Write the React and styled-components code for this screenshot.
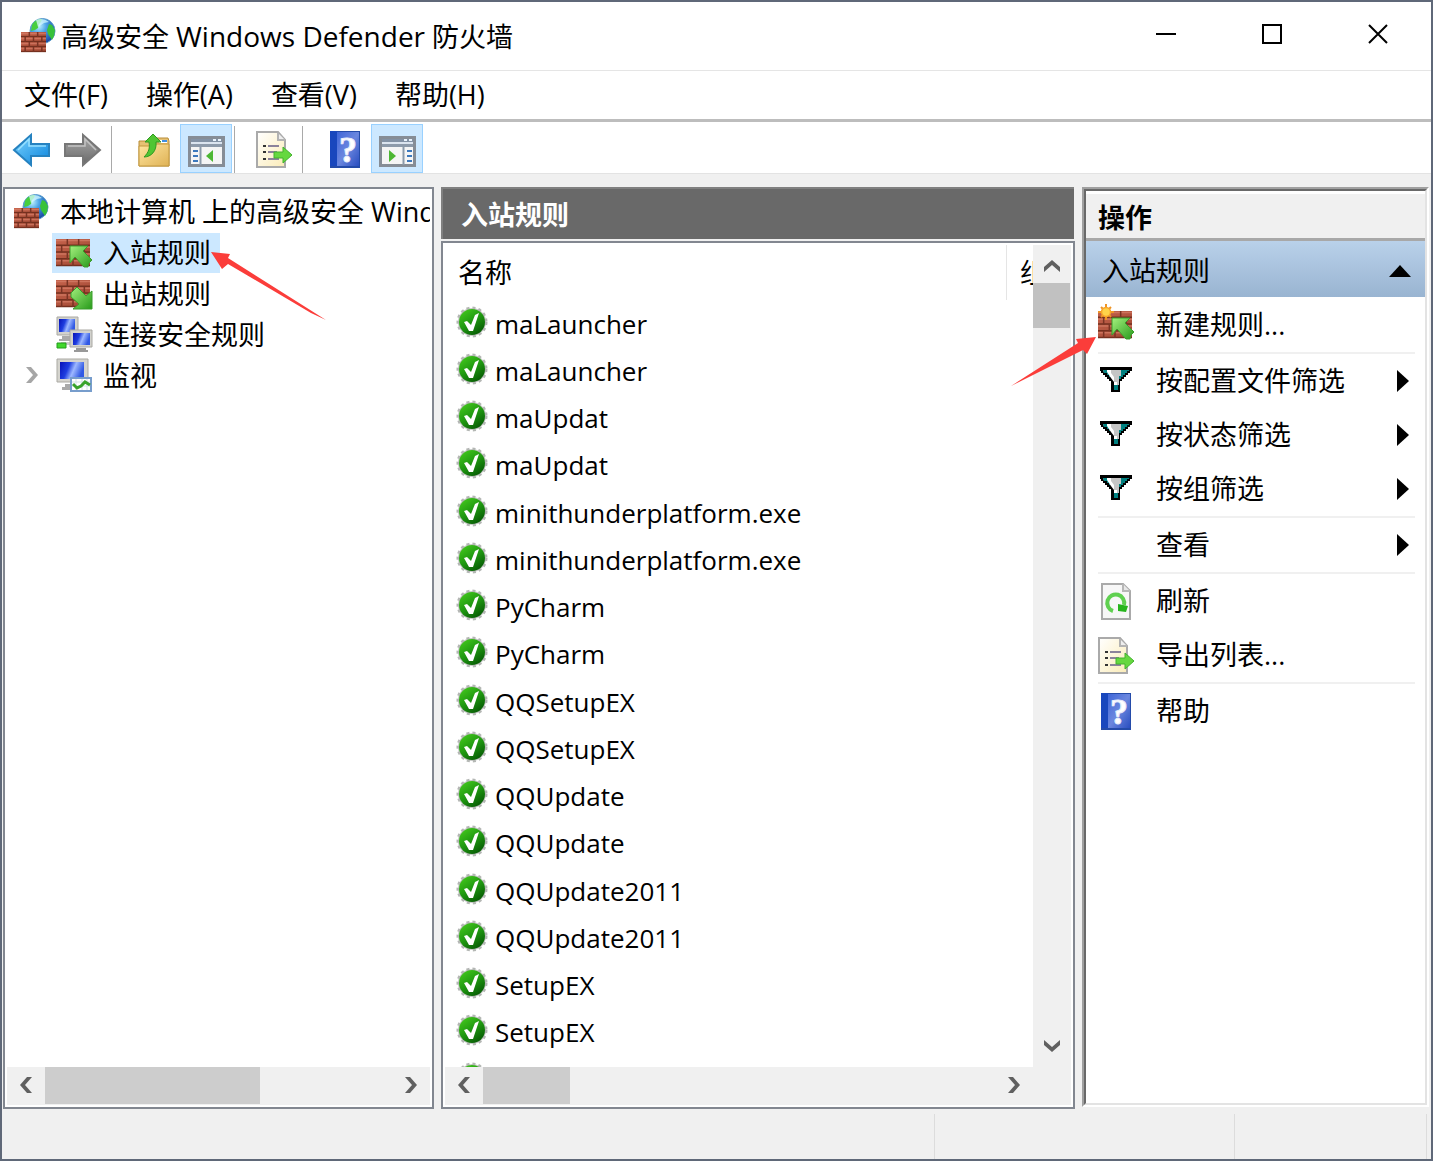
import styled, { createGlobalStyle } from "styled-components";

const GlobalStyle = createGlobalStyle`
  * {
    box-sizing: border-box;
  }

  body {
    margin: 0;
    color: #000;
    font-family: "Open Sans", "Noto Sans CJK SC", sans-serif;
    font-size: 27px;
    line-height: 40px;
  }

  button {
    padding: 0;
    border: 0;
    background: none;
    color: inherit;
    font: inherit;
    text-align: left;
    white-space: nowrap;
  }

  svg {
    display: block;
    flex: none;
  }
`;

const Window = styled.div`
  display: flex;
  flex-direction: column;
  height: 100vh;
  border: 2px solid #5f6878;
  background: #f0f0f0;
`;

const TitleBar = styled.header`
  display: flex;
  flex: none;
  align-items: center;
  height: 69px;
  padding-left: 19px;
  border-bottom: 1px solid #e5e5e5;
  background: #fff;
`;

const Title = styled.h1`
  flex: 1;
  margin: 0;
  padding-left: 5px;
  font-size: 27px;
  font-weight: 400;
`;

const ProductName = styled.span`
  font-size: 28px;
`;

const CaptionButton = styled.button`
  display: flex;
  align-items: center;
  align-self: flex-start;
  justify-content: center;
  width: 106px;
  height: 64px;
`;

const MenuBar = styled.nav`
  display: flex;
  flex: none;
  gap: 38px;
  height: 51px;
  padding: 4px 22px;
  border-bottom: 3px solid #bdbdbd;
  background: #fff;
`;

const MenuButton = styled.button`
  font-size: 27px;
`;

const Toolbar = styled.div`
  display: flex;
  flex: none;
  align-items: flex-end;
  height: 52px;
  padding-left: 3px;
  border-bottom: 1px solid #e3e3e3;
  background: #fff;
`;

const ToolButton = styled.button`
  display: flex;
  align-items: center;
  justify-content: center;
  width: 52px;
  height: 49px;
  padding-top: 2px;
  border: 1px solid ${({ $active }) => ($active ? "#99d1ff" : "transparent")};
  background: ${({ $active }) => ($active ? "#cce8ff" : "none")};
`;

const ToolDivider = styled.span`
  width: 1px;
  height: 47px;
  margin-right: ${({ $gap }) => $gap}px;
  margin-left: 2px;
  background: #a9a9a9;
`;

const Panes = styled.main`
  display: grid;
  flex: 1;
  grid-template-columns: 431fr 634fr 347fr;
  gap: 7px;
  min-height: 0;
  padding: 13px 2px 0 1px;
`;

const TreePane = styled.section`
  display: flex;
  flex-direction: column;
  min-width: 0;
  border: 2px solid #828790;
  background: #fff;
`;

const Tree = styled.ul`
  flex: 1;
  min-height: 0;
  margin: 0 2px 0 0;
  padding: 2px 0 0;
  overflow: hidden;
  list-style: none;
`;

const TreeRow = styled.li`
  position: relative;
  display: flex;
  align-items: center;
  height: 41px;
  padding-left: ${({ $root }) => ($root ? 9 : 0)}px;
`;

const Expander = styled.button`
  display: flex;
  justify-content: center;
  width: 47px;
  padding-left: 7px;
`;

const TreeButton = styled.button`
  display: flex;
  align-items: center;
  gap: ${({ $root }) => ($root ? 11 : 10)}px;
  min-width: 0;
  padding: 0 9px 0 ${({ $root }) => ($root ? 0 : 4)}px;
  background: ${({ $selected }) => ($selected ? "#cce8ff" : "none")};
`;

const TreeArrow = styled.svg`
  position: absolute;
  top: 20px;
  left: 206px;
`;

const ListPane = styled.section`
  display: flex;
  flex-direction: column;
  min-width: 0;
  min-height: 0;
`;

const PaneTitle = styled.h2`
  flex: none;
  height: 52px;
  margin: 0 1px 0 0;
  padding: 6px 18px;
  border: 2px solid #808080;
  border-right: 0;
  border-bottom: 0;
  background: #696969;
  color: #fff;
  font-size: 27px;
  font-weight: 700;
`;

const ListBox = styled.div`
  display: flex;
  flex: 1;
  flex-direction: column;
  min-height: 0;
  margin-top: 2px;
  padding: 2px 2px 0;
  border: 2px solid #828790;
  background: #fff;
`;

const ListBody = styled.div`
  display: flex;
  flex: 1;
  min-height: 0;
`;

const TableClip = styled.div`
  flex: 1;
  min-width: 0;
  overflow: hidden;
`;

const RuleTable = styled.table`
  width: 100%;
  table-layout: fixed;
  border-collapse: collapse;
  text-align: left;
`;

const HeadCell = styled.th`
  width: ${({ $width }) => $width || "auto"};
  height: 55px;
  padding: 0 13px;
  border-right: 1px solid #e5e5e5;
  overflow: hidden;
  font-weight: 400;
  white-space: nowrap;

  &:last-child {
    border-right: 0;
  }
`;

const RuleRow = styled.tr`
  height: 47px;

  &:nth-child(4n) {
    height: 48px;
  }
`;

const RuleCell = styled.td`
  padding: 0 0 0 11px;
`;

const RuleName = styled.div`
  display: flex;
  align-items: center;
  gap: 7px;
  font-size: 26px;

  svg {
    margin-bottom: 4px;
  }
`;

const VerticalBar = styled.div`
  display: flex;
  flex: none;
  flex-direction: column;
  width: 38px;
  background: #f0f0f0;
`;

const HorizontalBar = styled.div`
  display: flex;
  flex: none;
  height: 38px;
  margin: ${({ $corner }) => ($corner ? "0 0 2px" : "0 2px 2px")};
  padding-right: ${({ $corner }) => ($corner ? 38 : 0)}px;
  background: #f0f0f0;
`;

const ScrollButton = styled.button`
  display: flex;
  align-items: center;
  justify-content: center;
  width: 38px;
  height: 38px;
`;

const ScrollTrack = styled.div`
  flex: 1;
`;

const ScrollThumb = styled.div`
  width: ${({ $width }) => $width};
  height: ${({ $height }) => $height};
  background: ${({ $color }) => $color || "#cdcdcd"};
`;

const ActionPane = styled.aside`
  min-width: 0;
  margin-bottom: 2px;
  border: 2px solid #a0a0a0;
  border-right-color: #fff;
  border-bottom-color: #fff;
  background: #fff;
`;

const ActionFrame = styled.div`
  height: 100%;
  border: 2px solid #696969;
  border-right-color: #e3e3e3;
  border-bottom-color: #e3e3e3;
`;

const ActionTitle = styled.h2`
  height: 50px;
  margin: 0;
  padding: 4px 12px;
  border-top: 3px solid #fff;
  border-bottom: 3px solid #a8a8a8;
  background: #f0f0f0;
  font-size: 27px;
  font-weight: 700;
`;

const ActionGroup = styled.button`
  display: flex;
  align-items: center;
  justify-content: space-between;
  width: 100%;
  height: 56px;
  padding: 3px 14px 0 16px;
  background: linear-gradient(#b9d1ea, #99b4d1);
`;

const ActionList = styled.ul`
  margin: 0;
  padding: 1px 10px 0 12px;
  list-style: none;
`;

const ActionItem = styled.li`
  position: relative;
  border-bottom: ${({ $divided }) => ($divided ? "2px solid #f0f0f0" : "0")};
`;

const ActionButton = styled.button`
  display: grid;
  grid-template-columns: 36px 1fr auto;
  align-items: center;
  gap: 22px;
  width: 100%;
  height: 54px;
  padding-right: 6px;
`;

const IconSlot = styled.span`
  display: flex;
  justify-content: center;
`;

const ActionArrow = styled.svg`
  position: absolute;
  top: 38px;
  left: -88px;
`;

const StatusBar = styled.footer`
  display: grid;
  flex: none;
  grid-template-columns: 934fr 300fr 192fr;
  height: 50px;
  margin-right: 4px;
  padding-top: 5px;
`;

const StatusCell = styled.div`
  border-right: 1px solid #dcdcdc;
`;

function Bricks({ x = 0, y = 0, width, height, rows = 4 }) {
  const step = height / rows;
  const brick = width / 3;
  const joints = [];
  for (let row = 0; row < rows; row++) {
    const start = row % 2 ? brick / 2 : brick;
    for (let jx = start; jx < width - 1; jx += brick) {
      joints.push(`M${x + jx} ${y + row * step}v${step}`);
    }
  }
  const lines = Array.from({ length: rows }, (_, i) => y + i * step);
  return (
    <g>
      <rect x={x} y={y} width={width} height={height} fill="url(#brick)" />
      {lines.map((line) => (
        <g key={line}>
          <path d={`M${x} ${line + 1.5}h${width}`} stroke="#d8806a" strokeWidth="1.5" opacity=".7" />
          <path d={`M${x} ${line + step - 0.5}h${width}`} stroke="#75301f" strokeWidth="1.3" />
        </g>
      ))}
      <path d={joints.join("")} stroke="#7a3424" strokeWidth="1.5" />
    </g>
  );
}

function SharedGradients() {
  return (
    <svg width="0" height="0" style={{ position: "absolute" }} aria-hidden="true">
      <defs>
        <linearGradient id="brick" x2="1" y2="1">
          <stop offset="0" stopColor="#c4624b" />
          <stop offset="1" stopColor="#a04733" />
        </linearGradient>
        <radialGradient id="globe" cx=".35" cy=".3" r=".75">
          <stop offset="0" stopColor="#c5f4ff" />
          <stop offset=".4" stopColor="#4ca5e8" />
          <stop offset="1" stopColor="#1745a0" />
        </radialGradient>
        <linearGradient id="green" x2="1" y2="1">
          <stop offset="0" stopColor="#a4f07e" />
          <stop offset="1" stopColor="#279a1a" />
        </linearGradient>
        <linearGradient id="badge" x2=".7" y2="1">
          <stop offset="0" stopColor="#49d01e" />
          <stop offset=".55" stopColor="#209911" />
          <stop offset="1" stopColor="#075c05" />
        </linearGradient>
        <linearGradient id="blueArrow" x2="1" y2="1">
          <stop offset="0" stopColor="#7bd4ff" />
          <stop offset="1" stopColor="#0a83dc" />
        </linearGradient>
        <linearGradient id="grayArrow" x2="0" y2="1">
          <stop offset="0" stopColor="#a9a9a9" />
          <stop offset="1" stopColor="#686868" />
        </linearGradient>
        <linearGradient id="screen" x2="1" y2=".3">
          <stop offset="0" stopColor="#0712b8" />
          <stop offset=".4" stopColor="#1f3ee0" />
          <stop offset=".65" stopColor="#9db8ff" />
          <stop offset="1" stopColor="#3159e4" />
        </linearGradient>
        <linearGradient id="folder" x2="1" y2="1">
          <stop offset="0" stopColor="#ffe6a1" />
          <stop offset="1" stopColor="#dfb255" />
        </linearGradient>
        <linearGradient id="help" x2="1" y2="1">
          <stop offset="0" stopColor="#3f66d8" />
          <stop offset=".5" stopColor="#6b87df" />
          <stop offset="1" stopColor="#2a4ec0" />
        </linearGradient>
        <linearGradient id="paper" x2="1" y2="1">
          <stop offset="0" stopColor="#fff" />
          <stop offset="1" stopColor="#fbecb8" />
        </linearGradient>
      </defs>
    </svg>
  );
}

function FirewallIcon() {
  return (
    <svg width="35" height="36" viewBox="0 1 35 36" aria-hidden="true">
      <circle cx="21.5" cy="14" r="12.5" fill="url(#globe)" stroke="#5b9bc9" />
      <path d="M11 8c2-4 6-6 10-6l-1 3-2 2-1 4-3 2-4 1z" fill="#48cf3f" />
      <path d="M28 7l3 1 3 5-1 6-2 4-4-6-1-4z" fill="#38c23b" />
      <path d="M15 3q7-3 13 2l-5 1-6 4z" fill="#d5f8ff" opacity=".75" />
      <Bricks x={0} y={15} width={25} height={20} rows={4} />
    </svg>
  );
}

function RuleArrow({ inbound }) {
  return (
    <path
      d={
        inbound
          ? "M14 9h18l-5 5 9 9-3 3-1 4h-4l-9-10-5 6z"
          : "M15 15l6-6 9 9 6-5v18H17l6-5-8-7z"
      }
      fill="url(#green)"
      stroke="#3b9d2c"
    />
  );
}

function RuleIcon({ inbound, star }) {
  return (
    <svg width="37" height="36" viewBox="0 0 37 36" overflow="visible" aria-hidden="true">
      <Bricks x={0} y={4} width={34} height={27} rows={4} />
      <g transform="translate(0 2)">
        <RuleArrow inbound={inbound} />
      </g>
      {star && (
        <g transform="translate(-1 -4)">
          <path d="M9 1v16M1 9h16M4 4l10 10M14 4L4 14" stroke="#ef9425" strokeWidth="2" />
          <circle cx="9" cy="9" r="4.5" fill="#ffd34a" stroke="#f7a52c" strokeWidth="1.5" />
        </g>
      )}
    </svg>
  );
}

function ConnectionIcon() {
  return (
    <svg width="37" height="37" viewBox="0 0 37 37" aria-hidden="true">
      <path d="M1 1h21v18H1z" fill="#d2d2cd" stroke="#aaa9a3" />
      <path d="M3 3h16v13H3z" fill="url(#screen)" />
      <path d="M6 20h9v3H6zM3 23h12v2H3z" fill="#aaa" />
      <path d="M5 26h9v3H5z" fill="#ccc" />
      <path d="M1 27h9v5H1z" fill="#42d72d" stroke="#239c1c" />
      <path d="M14 14h22v17H14z" fill="#d2d2cd" stroke="#aaa9a3" />
      <path d="M17 17h17v12H17z" fill="url(#screen)" />
      <path d="M20 32h10v2H20zM18 34h14v2H18z" fill="#999" />
    </svg>
  );
}

function MonitorIcon() {
  return (
    <svg width="37" height="36" viewBox="0 0 37 36" aria-hidden="true">
      <path d="M1 1h31v23H1z" fill="#d5d4ce" stroke="#aaa9a3" />
      <path d="M4 4h24v17H4z" fill="url(#screen)" />
      <path d="M9 26h8v3H9zM6 29h12v3H6z" fill="#aaa" />
      <path d="M15 20h20v13H15z" fill="#fff" stroke="#779dcc" strokeWidth="2" />
      <path d="M16 24h18M16 28h18M20 21v11M26 21v11M31 21v11" stroke="#d3e2e6" />
      <path d="M17 26l4 4 4-2 4-4 5 3" fill="none" stroke="#38a32b" strokeWidth="3" />
    </svg>
  );
}

function CheckIcon() {
  return (
    <svg width="32" height="32" viewBox="0 0 32 32" aria-hidden="true">
      <circle cx="16" cy="16" r="14" fill="#c6c9c6" stroke="#b4b7b4" strokeWidth="3" strokeDasharray="3 3" />
      <circle cx="16" cy="16" r="13" fill="url(#badge)" />
      <path d="M8 16l3-1 4 4 4-10 4-2-6 18h-4z" fill="#fff" />
    </svg>
  );
}

function ArrowIcon({ forward }) {
  return (
    <svg width="38" height="36" viewBox="0 0 38 36" aria-hidden="true">
      <path
        d={forward ? "M1 12h18V3l17 15-17 15V24H1z" : "M37 12H19V3L2 18l17 15V24h18z"}
        fill={forward ? "url(#grayArrow)" : "url(#blueArrow)"}
        stroke={forward ? "#777" : "#2682c0"}
        strokeWidth="2"
      />
      <path
        d={forward ? "M4 14h17V7l11 11" : "M34 14H17V7L6 18"}
        fill="none"
        stroke={forward ? "#c2c2c2" : "#96e0ff"}
        strokeWidth="1.5"
      />
    </svg>
  );
}

function FolderIcon() {
  return (
    <svg width="34" height="36" viewBox="0 -1 34 36" aria-hidden="true">
      <path d="M2 8h9l2-3h18l1 3v25H2z" fill="#e6c174" stroke="#b88d38" />
      <path d="M22 7h8v3h-8z" fill="#fff" />
      <path d="M25 7h5v2h-5z" fill="#408ee0" />
      <path d="M2 13h13l2-2h15v22H2z" fill="url(#folder)" stroke="#c3983f" />
      <path d="M16 1l8 8h-5c1 9-5 15-12 15 5-5 6-9 5-15H8z" fill="#50c633" stroke="#319921" />
    </svg>
  );
}

function PaneIcon({ right }) {
  return (
    <svg width="37" height="35" viewBox="0 -4 37 35" aria-hidden="true">
      <path d="M1.500 1.500h34v28h-34z" fill="#f5f5f5" stroke="#868d96" strokeWidth="3" />
      <path d="M3 3h31v3H3z" fill="#8392a5" />
      <path d="M3 6h31v2H3z" fill="#dbe4ef" />
      <path d="M3 8h31v3H3z" fill="#8d9aaa" />
      <path d="M25 3h3v2h-3zM30 3h3v2h-3z" fill="#e9f2fb" />
      <path d={right ? "M24.500 11v18" : "M12.500 11v18"} stroke="#8b9aaa" strokeWidth="2" />
      <path d={right ? "M28 15h5M28 20h5M28 25h5" : "M5 15h5M5 20h5M5 25h5"} stroke="#3c78bc" strokeWidth="2" />
      <path d={right ? "M10 14l7 6-7 6z" : "M25 14l-7 6 7 6z"} fill="#4db733" />
    </svg>
  );
}

function ExportIcon() {
  return (
    <svg width="37" height="37" viewBox="0 0 37 37" aria-hidden="true">
      <path d="M1 1h21l7 8v27H1z" fill="url(#paper)" stroke="#aaa" strokeWidth="2" />
      <path d="M22 2v7h7" fill="#eee" stroke="#b3b3b3" strokeWidth="2" />
      <path d="M7 15h3M7 21h3M7 28h3" stroke="#333" strokeWidth="2" />
      <path d="M12 15h11M12 21h9M12 28h11" stroke="#8b829b" strokeWidth="2" />
      <path d="M18 21h9v-5l9 8-9 8v-5h-9z" fill="#66d83f" stroke="#42b22f" />
    </svg>
  );
}

function RefreshIcon() {
  return (
    <svg width="32" height="37" viewBox="0 0 32 37" aria-hidden="true">
      <path d="M2 1h21l7 7v28H2z" fill="#f7f7f7" stroke="#aaa" strokeWidth="2" />
      <path d="M23 1v7h7" fill="#e8e8e8" stroke="#b7b7b7" strokeWidth="2" />
      <path d="M13 28a8.500 8.500 0 1 1 11-6" fill="none" stroke="#5fd050" strokeWidth="4" />
      <path d="M18 21l10 2-2 6-8-1z" fill="#27b51d" />
    </svg>
  );
}

function HelpIcon() {
  return (
    <svg width="30" height="37" viewBox="0 0 30 37" aria-hidden="true">
      <path d="M0 0h30v37H0z" fill="#244ba9" />
      <path d="M0 0h7v35H0z" fill="#1947bd" />
      <path d="M7 1h22v34H7z" fill="url(#help)" />
      <g fontFamily="Liberation Serif, serif" fontSize="36" fontWeight="700" textAnchor="middle">
        <text x="18" y="31" fill="#fff" stroke="#e8edfb" strokeWidth="1">?</text>
      </g>
    </svg>
  );
}

function FilterIcon() {
  return (
    <svg width="32" height="28" viewBox="0 0 32 28" aria-hidden="true">
      <path d="M0 0h32v4h-2v2h-2v2h-2v2h-2v2h-2v2h-2v11h-9V14H9v-2H7v-2H5V8H3V6H1V4H0z" fill="#000" />
      <path d="M3 3h26v1h-2v2h-2v2h-2v2h-2v2h-2v3h-5v-3h-2v-2H9V8H7V6H4z" fill="#c5c5c5" />
      <path d="M21 3h8v1h-2v2h-2v2h-2v2h-2v2h-2V9h2zM3 3h4l4 7H9V8H7V6H4zM14 18h4v5h-4z" fill="#008080" />
      <path d="M7 3h4v3l3 4v8h3v-3h-3l-3-4-4-6z" fill="#fff" />
      <path d="M17 12h2v6h-2z" fill="#c5c5c5" />
    </svg>
  );
}

const chevrons = {
  left: "M14 0H9L2 8l7 8h5L7 8z",
  right: "M2 0h5l7 8-7 8H2l7-8z",
  up: "M0 17v-5l8-7 8 7v5l-8-7z",
  down: "M0 1v5l8 7 8-7V1L8 8z",
};

function Chevron({ direction, color = "#606060" }) {
  return (
    <svg width="16" height="18" viewBox="0 0 16 18" aria-hidden="true">
      <path d={chevrons[direction]} fill={color} />
    </svg>
  );
}

function HorizontalScroll({ thumb, corner }) {
  return (
    <HorizontalBar $corner={corner}>
      <ScrollButton aria-label="向左滚动">
        <Chevron direction="left" />
      </ScrollButton>
      <ScrollTrack>
        <ScrollThumb $width={thumb} $height="37px" />
      </ScrollTrack>
      <ScrollButton aria-label="向右滚动">
        <Chevron direction="right" />
      </ScrollButton>
    </HorizontalBar>
  );
}

const menus = ["文件(F)", "操作(A)", "查看(V)", "帮助(H)"];

const treeItems = [
  { name: "入站规则", icon: <RuleIcon inbound />, selected: true },
  { name: "出站规则", icon: <RuleIcon /> },
  { name: "连接安全规则", icon: <ConnectionIcon /> },
  { name: "监视", icon: <MonitorIcon />, expandable: true },
];

const rules = [
  "maLauncher",
  "maLauncher",
  "maUpdat",
  "maUpdat",
  "minithunderplatform.exe",
  "minithunderplatform.exe",
  "PyCharm",
  "PyCharm",
  "QQSetupEX",
  "QQSetupEX",
  "QQUpdate",
  "QQUpdate",
  "QQUpdate2011",
  "QQUpdate2011",
  "SetupEX",
  "SetupEX",
  "",
];

const actions = [
  { name: "新建规则...", icon: <RuleIcon inbound star />, divided: true, marked: true },
  { name: "按配置文件筛选", icon: <FilterIcon />, submenu: true },
  { name: "按状态筛选", icon: <FilterIcon />, submenu: true },
  { name: "按组筛选", icon: <FilterIcon />, submenu: true, divided: true },
  { name: "查看", submenu: true, divided: true },
  { name: "刷新", icon: <RefreshIcon /> },
  { name: "导出列表...", icon: <ExportIcon />, divided: true },
  { name: "帮助", icon: <HelpIcon /> },
];

export default function App() {
  return (
    <Window>
      <GlobalStyle />
      <SharedGradients />
      <TitleBar>
        <FirewallIcon />
        <Title>
          高级安全 <ProductName>Windows Defender</ProductName> 防火墙
        </Title>
        <CaptionButton aria-label="最小化">
          <svg width="20" height="20" viewBox="0 0 20 20">
            <path d="M0 10h20" stroke="#000" strokeWidth="2" />
          </svg>
        </CaptionButton>
        <CaptionButton aria-label="最大化">
          <svg width="20" height="20" viewBox="0 0 20 20">
            <path d="M1 1h18v18H1z" fill="none" stroke="#000" strokeWidth="2" />
          </svg>
        </CaptionButton>
        <CaptionButton aria-label="关闭">
          <svg width="20" height="20" viewBox="0 0 20 20">
            <path d="M1 1l18 18M19 1L1 19" stroke="#000" strokeWidth="2" />
          </svg>
        </CaptionButton>
      </TitleBar>

      <MenuBar>
        {menus.map((menu) => (
          <MenuButton key={menu}>{menu}</MenuButton>
        ))}
      </MenuBar>

      <Toolbar>
        <ToolButton aria-label="后退">
          <ArrowIcon />
        </ToolButton>
        <ToolButton aria-label="前进">
          <ArrowIcon forward />
        </ToolButton>
        <ToolDivider $gap={16} />
        <ToolButton aria-label="上一级">
          <FolderIcon />
        </ToolButton>
        <ToolButton $active aria-label="显示/隐藏控制台树">
          <PaneIcon />
        </ToolButton>
        <ToolDivider $gap={13} />
        <ToolButton aria-label="导出列表">
          <ExportIcon />
        </ToolButton>
        <ToolDivider $gap={16} />
        <ToolButton aria-label="帮助">
          <HelpIcon />
        </ToolButton>
        <ToolButton $active aria-label="显示/隐藏操作窗格">
          <PaneIcon right />
        </ToolButton>
      </Toolbar>

      <Panes>
        <TreePane>
          <Tree>
            <TreeRow $root>
              <TreeButton $root>
                <FirewallIcon />
                本地计算机 上的高级安全 Windows Defender 防火墙
              </TreeButton>
            </TreeRow>
            {treeItems.map((item) => (
              <TreeRow key={item.name}>
                <Expander as={item.expandable ? "button" : "span"} aria-label={item.expandable ? "展开" : undefined}>
                  {item.expandable && <Chevron direction="right" color="#a6a6a6" />}
                </Expander>
                <TreeButton $selected={item.selected}>
                  {item.icon}
                  {item.name}
                </TreeButton>
                {item.selected && (
                  <TreeArrow width="118" height="70" viewBox="0 0 118 70" aria-hidden="true">
                    <path d="M0 0l19 2-2 4 98 62L100 61 17 12l-6 5z" fill="#fb3d3a" />
                  </TreeArrow>
                )}
              </TreeRow>
            ))}
          </Tree>
          <HorizontalScroll thumb="62%" />
        </TreePane>

        <ListPane>
          <PaneTitle>入站规则</PaneTitle>
          <ListBox>
            <ListBody>
              <TableClip>
                <RuleTable>
                  <thead>
                    <tr>
                      <HeadCell>名称</HeadCell>
                      <HeadCell $width="26px">组</HeadCell>
                    </tr>
                  </thead>
                  <tbody>
                    {rules.map((rule, index) => (
                      <RuleRow key={index}>
                        <RuleCell colSpan={2}>
                          <RuleName>
                            <CheckIcon />
                            {rule}
                          </RuleName>
                        </RuleCell>
                      </RuleRow>
                    ))}
                  </tbody>
                </RuleTable>
              </TableClip>
              <VerticalBar>
                <ScrollButton aria-label="向上滚动">
                  <Chevron direction="up" />
                </ScrollButton>
                <ScrollTrack>
                  <ScrollThumb $width="37px" $height="6%" $color="#c1c1c1" />
                </ScrollTrack>
                <ScrollButton aria-label="向下滚动">
                  <Chevron direction="down" />
                </ScrollButton>
              </VerticalBar>
            </ListBody>
            <HorizontalScroll thumb="17%" corner />
          </ListBox>
        </ListPane>

        <ActionPane>
          <ActionFrame>
            <ActionTitle>操作</ActionTitle>
            <ActionGroup>
              入站规则
              <svg width="22" height="12" viewBox="0 0 22 12" aria-hidden="true">
                <path d="M0 12L11 0l11 12z" />
              </svg>
            </ActionGroup>
            <ActionList>
              {actions.map((action) => (
                <ActionItem key={action.name} $divided={action.divided}>
                  <ActionButton>
                    <IconSlot>{action.icon}</IconSlot>
                    <span>{action.name}</span>
                    {action.submenu && (
                      <svg width="12" height="22" viewBox="0 0 12 22" aria-hidden="true">
                        <path d="M0 0l12 11L0 22z" />
                      </svg>
                    )}
                  </ActionButton>
                  {action.marked && (
                    <ActionArrow width="88" height="52" viewBox="0 0 88 52" aria-hidden="true">
                      <path d="M86 1L66 3l2 4L1 50l72-36 4 4z" fill="#fb3d3a" />
                    </ActionArrow>
                  )}
                </ActionItem>
              ))}
            </ActionList>
          </ActionFrame>
        </ActionPane>
      </Panes>

      <StatusBar>
        <StatusCell />
        <StatusCell />
        <StatusCell />
      </StatusBar>
    </Window>
  );
}
